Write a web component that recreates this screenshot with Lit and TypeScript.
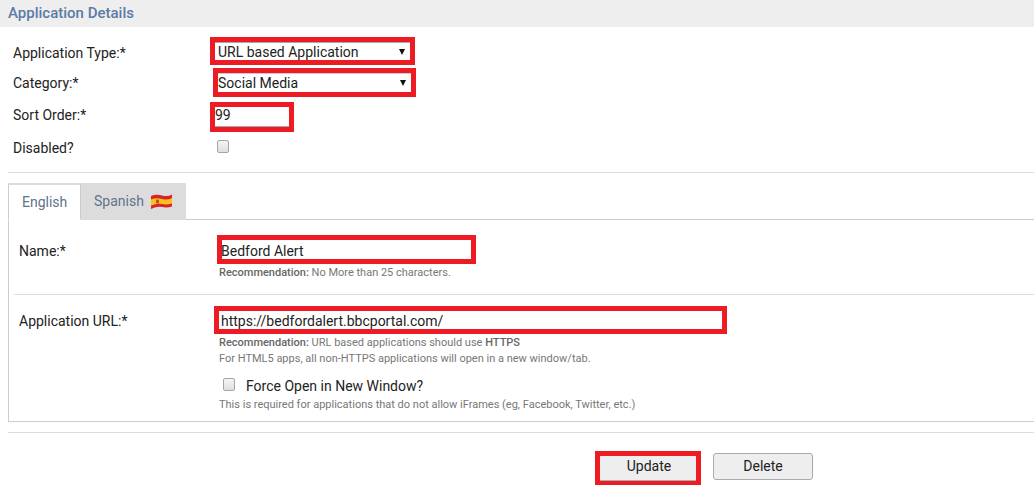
import { LitElement, html, css } from "lit";
import { customElement } from "lit/decorators.js";

@customElement("app-root")
export class AppRoot extends LitElement {
  static styles = css`
    :host { display: block; width: 1034px; height: 485px; overflow: hidden; background: #fff; font-family: Roboto, "Liberation Sans", sans-serif; font-size: 14px; color: #333; }
    * { box-sizing: border-box; }
    .head { height: 27px; background: #eeeeee; padding-left: 8px; line-height: 27px; font-size: 15px; font-weight: 500; color: #5b7ba6; }
    .form { padding: 10px 0 0 13px; display: flex; flex-direction: column; }
    .row { display: flex; align-items: center; }
    .label { color: #222; }
    .w197 { width: 197px; }
    .w200 { width: 200px; }
    .down2 { padding-top: 4px; }
    .up2 { padding-bottom: 5px; }
    .field { border: 5px solid #ed1c24; background: #fff; color: #222; display: flex; align-items: center; font-size: 14px; line-height: 18px; }
    .sel { justify-content: space-between; padding: 0 3px 0 3px; }
    .sel1 { width: 205px; height: 28px; box-shadow: inset 0 1px 0 #aaa; padding-top: 1px; }
    .sel2 { width: 203px; height: 29px; padding-left: 0; box-shadow: inset 0 1px 0 #ccc; }
    .row2 { margin-top: 3px; }
    .row3 { margin-top: 5px; }
    .arrow { width: 0; height: 0; border-left: 3.5px solid transparent; border-right: 3.5px solid transparent; border-top: 6px solid #111; margin-right: 2px; }
    .sort { width: 84px; height: 30px; box-shadow: inset 0 -1px 0 #aaa; padding: 0 0 4px 0; }
    .row4 { margin-top: 7px; height: 18px; }
    .cb { display: block; width: 12px; height: 13px; border: 1px solid #a5a5a5; border-radius: 2px; background: linear-gradient(#f4f4f4, #e0e0e0); }
    .cb1 { margin: 0 0 3px 7px; }
    .rule { height: 1px; background: #ddd; }
    .rule1 { margin: 15px 0 0 8px; }
    .tabs { margin: 10px 0 0 8px; display: flex; height: 37px; border-bottom: 1px solid #ccc; }
    .tab { display: flex; align-items: center; height: 37px; font-size: 14px; color: #60748a; padding-bottom: 1px; }
    .tab.on { width: 73px; padding-left: 13px; background: #fff; border: 1px solid #ccc; border-bottom-color: #fff; border-right: 1px solid #ccc; border-top: 2px solid #ddd; }
    .tab.off { width: 105px; padding-left: 13px; background: #dcdcdc; gap: 7px; }
    .panel { margin-left: 8px; height: 202px; border-left: 1px solid #ccc; border-bottom: 1px solid #ccc; display: flex; flex-direction: column; }
    .sec { display: flex; padding-left: 10px; }
    .name { padding-top: 15px; height: 74px; }
    .lbl { width: 198px; padding-top: 8px; color: #222; }
    .lbl2 { width: 195px; padding-top: 7px; color: #222; }
    .f-name { width: 259px; height: 29px; padding: 3px 0 0 0; text-indent: -1px; }
    .f-url { width: 513px; height: 28px; padding: 2px 0 0 2px; font-size: 14px; }
    .help { font-size: 11px; line-height: 16px; color: #777; }
    .help b { font-weight: 500; color: #666; }
    .help.n { margin: 1px 0 0 2px; }
    .urlhelp { margin: 1px 0 0 5px; }
    .url { padding-top: 11px; }
    .inner { height: 1px; background: #ddd; margin-left: 5px; }
    .check { display: flex; align-items: center; gap: 11px; margin: 10px 0 2px 9px; color: #222; font-size: 14px; line-height: 18px; }
    .check .cb { margin-bottom: 3px; }
    .rule2 { margin: 10px 0 0 8px; }
    .actions { display: flex; align-items: flex-start; margin: 18px 0 0 595px; gap: 12px; }
    .btn { font: 14px Roboto, sans-serif; color: #222; background: #eeeeee; display: flex; align-items: center; justify-content: center; }
    .update { width: 106px; height: 35px; border: 5px solid #ed1c24; box-shadow: inset 0 -1px 0 #aaa; padding: 0 0 6px 2px; }
    .delete { width: 100px; height: 27px; margin-top: 2px; border: 1px solid #aaa; border-radius: 3px; padding-bottom: 2px; }
  `;

  render() {
    return html`
      <div class="head">Application Details</div>
      <div class="form">
        <div class="row">
          <div class="label w197 down2">Application Type:*</div>
          <div class="field sel sel1"><span>URL based Application</span><i class="arrow"></i></div>
        </div>
        <div class="row row2">
          <div class="label w200">Category:*</div>
          <div class="field sel sel2"><span>Social Media</span><i class="arrow"></i></div>
        </div>
        <div class="row row3">
          <div class="label w197 up2">Sort Order:*</div>
          <div class="field sort">99</div>
        </div>
        <div class="row row4">
          <div class="label w197">Disabled?</div>
          <span class="cb cb1"></span>
        </div>
      </div>
      <div class="rule rule1"></div>
      <div class="tabs">
        <div class="tab on">English</div>
        <div class="tab off">Spanish
          <svg width="21" height="17" viewBox="0 0 21 17">
            <path d="M0 3 Q5 1 11 2.5 T21 1.5 V13.5 Q16 15 11 14 T0 16Z" fill="#d8232a"/>
            <path d="M0 6.5 Q5 4.5 11 6 T21 5 V10.5 Q16 12 11 11 T0 12.5Z" fill="#f9c21a"/>
            <rect x="5" y="6.5" width="3" height="4" rx="1" fill="#b5502a"/>
          </svg>
        </div>
      </div>
      <div class="panel">
        <div class="sec name">
          <div class="lbl">Name:*</div>
          <div>
            <div class="field f-name">Bedford Alert</div>
            <div class="help n"><b>Recommendation:</b> No More than 25 characters.</div>
          </div>
        </div>
        <div class="inner"></div>
        <div class="sec url">
          <div class="lbl2">Application URL:*</div>
          <div>
            <div class="field f-url">https://bedfordalert.bbcportal.com/</div>
            <div class="help urlhelp"><b>Recommendation:</b> URL based applications should use <b>HTTPS</b><br>For HTML5 apps, all non-HTTPS applications will open in a new window/tab.</div>
            <div class="check"><span class="cb"></span>Force Open in New Window?</div>
            <div class="help urlhelp">This is required for applications that do not allow iFrames (eg, Facebook, Twitter, etc.)</div>
          </div>
        </div>
      </div>
      <div class="rule rule2"></div>
      <div class="actions">
        <div class="btn update">Update</div>
        <div class="btn delete">Delete</div>
      </div>
    `;
  }
}
